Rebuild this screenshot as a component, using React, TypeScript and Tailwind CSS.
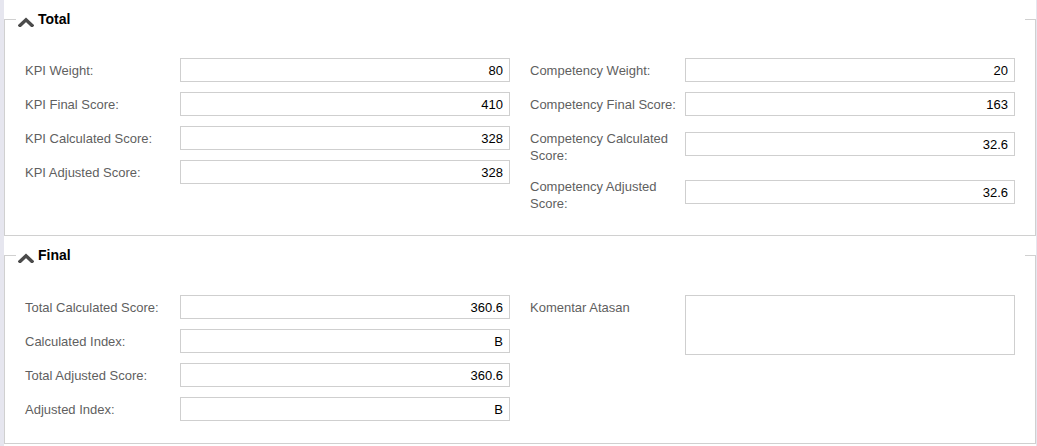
import React from "react";

interface Field {
    label: string;
    value: string;
    twoLine?: boolean;
}

const kpiFields: Field[] = [
    {label: "KPI Weight:", value: "80"},
    {label: "KPI Final Score:", value: "410"},
    {label: "KPI Calculated Score:", value: "328"},
    {label: "KPI Adjusted Score:", value: "328"},
];

const competencyFields: Field[] = [
    {label: "Competency Weight:", value: "20"},
    {label: "Competency Final Score:", value: "163"},
    {label: "Competency Calculated Score:", value: "32.6", twoLine: true},
    {label: "Competency Adjusted Score:", value: "32.6", twoLine: true},
];

const finalFields: Field[] = [
    {label: "Total Calculated Score:", value: "360.6"},
    {label: "Calculated Index:", value: "B"},
    {label: "Total Adjusted Score:", value: "360.6"},
    {label: "Adjusted Index:", value: "B"},
];

const ChevronUp = () => (
    <svg width="16" height="10" viewBox="0 0 16 10" className="mt-[5px] shrink-0">
        <polyline points="2,8.5 8,2.8 14,8.5" fill="none" stroke="#4b4b4b" strokeWidth="3.4" strokeLinecap="square"/>
    </svg>
);

const FieldRow: React.FC<{field: Field}> = ({field}) => (
    <div className="flex items-start">
        <label className="w-[155px] shrink-0 pt-[4px] pr-[8px] text-[#5f5f5f] leading-[17px]">
            {field.label}
        </label>
        <input
            readOnly
            value={field.value}
            className={`w-[330px] h-[24px] border border-[#cfcfcf] bg-white px-[6px] text-right text-black text-[13px] outline-none ${field.twoLine ? "mt-[6px]" : ""}`}
        />
    </div>
);

const Section: React.FC<{title: string; className?: string; children: React.ReactNode}> = ({title, className, children}) => (
    <fieldset className={`border border-[#d0d0d0] pl-[11px] pr-[10px] ${className ?? ""}`}>
        <legend className="w-full">
            <div className="flex items-center h-[22px] pl-[2px] gap-[4px]">
                <ChevronUp/>
                <span className="font-bold text-black text-[14px]">{title}</span>
            </div>
        </legend>
        {children}
    </fieldset>
);

export default function App() {
    return (
        <div className="w-[1037px] h-[446px] bg-[#e6e6ef] pl-[4px] pr-[1px] overflow-hidden font-['Liberation_Sans',Arial,sans-serif] text-[13px]">
            <div className="bg-white h-full pt-[8px]">
                {/*Total*/}
                <Section title="Total" className="pb-[23px]">
                    <div className="grid grid-cols-[485px_485px] gap-x-[20px] pl-[9px] pt-[28px]">
                        <div className="flex flex-col gap-[10px]">
                            {kpiFields.map((f) => (
                                <FieldRow key={f.label} field={f}/>
                            ))}
                        </div>
                        <div className="flex flex-col gap-[10px]">
                            {competencyFields.map((f) => (
                                <FieldRow key={f.label} field={f}/>
                            ))}
                        </div>
                    </div>
                </Section>

                {/*Final*/}
                <Section title="Final" className="mt-[8px] pb-[22px]">
                    <div className="grid grid-cols-[485px_485px] gap-x-[20px] pl-[9px] pt-[29px]">
                        <div className="flex flex-col gap-[10px]">
                            {finalFields.map((f) => (
                                <FieldRow key={f.label} field={f}/>
                            ))}
                        </div>
                        <div className="flex items-start">
                            <label className="w-[155px] shrink-0 pt-[4px] text-[#5f5f5f] leading-[17px]">
                                Komentar Atasan
                            </label>
                            <textarea
                                readOnly
                                className="w-[330px] h-[60px] border border-[#cfcfcf] bg-white resize-none outline-none"
                            />
                        </div>
                    </div>
                </Section>
            </div>
        </div>
    );
}
